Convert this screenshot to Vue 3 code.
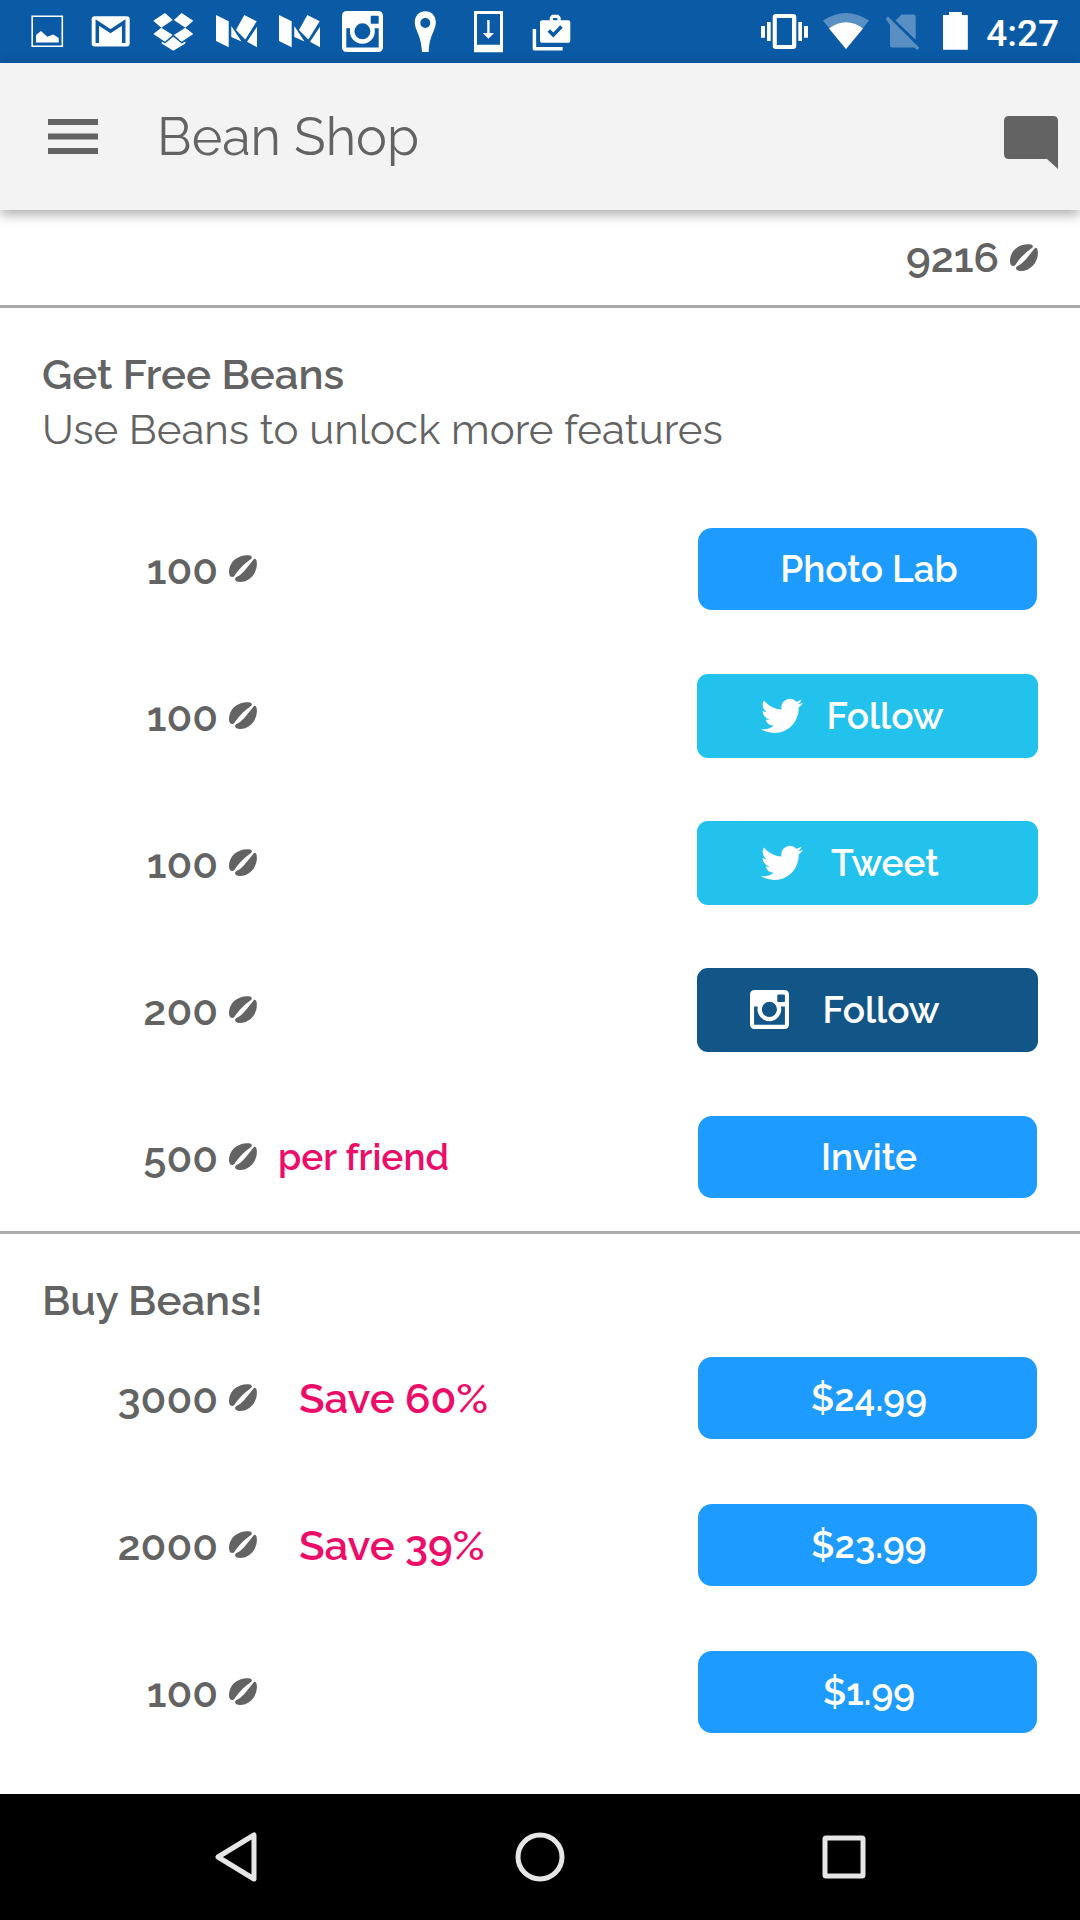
<script setup>
const beanUpper = 'M22 4C23.5 3 23 .8 21 .4C10-1 0 6 0 17C0 20 1 22 3.5 22C5 22 5.5 20.5 7 18.5C11 13 16 8 22 4Z'
const beanLower = 'M24.5 4.5C25.5 3.2 27 3.5 27.6 6C29.5 17 21 27 11 27C8 27 6 26 6 24C6.3 22 9 21.5 11 20C16 16 20 10 24.5 4.5Z'
const beanPath = beanUpper + beanLower
const cameraPath = 'M5 0H36Q41 0 41 5V36Q41 41 36 41H5Q0 41 0 36V5Q0 0 5 0ZM29.7 4.7Q28.7 4.7 28.7 5.7V11.7Q28.7 12.7 29.7 12.7H35.7Q36.7 12.7 36.7 11.7V5.7Q36.7 4.7 35.7 4.7ZM4.3 17.3H8.2A12.5 12.5 0 1 0 32.5 17.3H36.7V36.5H4.3ZM20.4 12.3A8 8 0 1 0 20.4 28.3A8 8 0 1 0 20.4 12.3Z'
const birdPath = 'M23.953 4.57a10 10 0 01-2.825.775 4.958 4.958 0 002.163-2.723c-.951.555-2.005.959-3.127 1.184a4.92 4.92 0 00-8.384 4.482C7.69 8.095 4.067 6.13 1.64 3.162a4.822 4.822 0 00-.666 2.475c0 1.71.87 3.213 2.188 4.096a4.904 4.904 0 01-2.228-.616v.06a4.923 4.923 0 003.946 4.827 4.996 4.996 0 01-2.212.085 4.936 4.936 0 004.604 3.417 9.867 9.867 0 01-6.102 2.105c-.39 0-.779-.023-1.17-.067a13.995 13.995 0 007.557 2.209c9.053 0 13.998-7.496 13.998-13.985 0-.21 0-.42-.015-.63A9.935 9.935 0 0024 4.59z'

const freeOffers = [
  { beans: 100, action: 'Photo Lab' },
  { beans: 100, action: 'Follow', network: 'twitter' },
  { beans: 100, action: 'Tweet', network: 'twitter' },
  { beans: 200, action: 'Follow', network: 'instagram' },
  { beans: 500, note: 'per friend', action: 'Invite' },
]
const packs = [
  { beans: 3000, note: 'Save 60%', action: '$24.99' },
  { beans: 2000, note: 'Save 39%', action: '$23.99' },
  { beans: 100, action: '$1.99' },
]
</script>

<template>
  <div class="screen">
    <div class="status">
      <div class="status-group">
        <svg viewBox="0 0 63 63"><path d="M16.2 16.2H46.3V46.3H16.2Z" fill="none" stroke="#fff" stroke-width="1.6" /><path d="M20 42.5V35L25 31L31.3 36.7L37.3 34.5L42.7 38V42.5Z" /></svg>
        <svg viewBox="0 0 63 63"><rect x="12.7" y="16.3" width="38" height="30.2" rx="3" /><path class="cut" d="M18.3 43V22.5L31.5 31.2L44.7 22.5V43" /></svg>
        <svg viewBox="0 0 63 63"><path d="M11.3 20.7L23 13L30.7 20L19.3 27.7ZM51.3 20.7L39.6 13L31.9 20L43.3 27.7ZM19.3 27.7L30.7 35L23 41.7L11.3 34ZM43.3 27.7L31.9 35L39.6 41.7L51.3 34ZM19.7 41.6L23 43.6L31.3 36.8L39.7 43.6L43.3 41.6V43.5L31.3 50.7L19.7 43.5Z" /></svg>
        <svg v-for="n in 2" :key="n" viewBox="0 0 63 63"><path d="M11 15L23.7 21.3V47.3L11 41ZM39.3 15L51.7 21.3L40.3 39.5L31 30ZM26.3 26L36.5 41.5L26.3 37ZM52 26.7V47.3L42 41.7Z" /></svg>
        <svg viewBox="0 0 63 63"><path transform="translate(11 11)" fill-rule="evenodd" :d="cameraPath" /></svg>
        <svg viewBox="0 0 63 63"><path fill-rule="evenodd" d="M31.3 11.3C37.5 11.3 41.8 16 41.8 22C41.8 31 35.5 34 34.7 52H28C27.2 34 20.8 31 20.8 22C20.8 16 25.2 11.3 31.3 11.3ZM31.3 18A5 5 0 1 0 31.3 28A5 5 0 1 0 31.3 18Z" /></svg>
        <svg viewBox="0 0 63 63"><path fill-rule="evenodd" d="M17 11H46V52.3H17ZM20 14V44.7H43V14Z" /><path d="M30.2 20H32.6V33H37L31.4 38.7L25.8 33H30.2Z" /></svg>
        <svg viewBox="0 0 63 63"><path fill-rule="evenodd" d="M22 20.3H29.7V17.5L32 14.8H38.3L40.7 17.5V20.3H48.3Q50.3 20.3 50.3 22.3V40.7Q50.3 42.7 48.3 42.7H22Q20 42.7 20 40.7V22.3Q20 20.3 22 20.3ZM33 20.3H37.4V18H33Z" /><path class="cut" d="M28.8 30.5L33.3 35L41.5 26.5" /><path d="M14.4 29V48.8H42.7" fill="none" stroke="#fff" stroke-width="3.5" stroke-linejoin="round" /></svg>
      </div>
      <div class="status-group">
        <svg class="vibrate" viewBox="0 0 55 63"><path d="M0 26H4V37.7H0ZM6 22H9.7V41H6ZM37.3 22H41V41H37.3ZM43 26H47V37.7H43Z" /><path fill-rule="evenodd" d="M15 14H32Q35.3 14 35.3 17.3V45.7Q35.3 49 32 49H15Q11.7 49 11.7 45.7V17.3Q11.7 14 15 14ZM15.8 18V45H31V18Z" /></svg>
        <svg class="wifi" viewBox="0 0 60 63"><path opacity=".32" d="M30 49L7 20.5Q30 5.5 53 20.5Z" /><path d="M30 49L13 28.5Q30 16 47 28.5Z" /></svg>
        <svg class="sim" viewBox="0 0 54 63"><g opacity=".32"><path d="M19.5 20.5L25.7 14.5H37.5Q39.7 14.5 39.7 17V39.7ZM14 25L9.7 19L12 16.5L43.3 47.8L41 50L38.3 47.5H16.5Q14 47.5 14 45Z" /></g></svg>
        <svg class="battery" viewBox="0 0 50 63"><path d="M13 15H19V12H31.8V15H37.8V49.7H13Z" /></svg>
        <time class="clock">4:27</time>
      </div>
    </div>

    <header class="toolbar">
      <button class="icon-button" aria-label="Menu">
        <svg class="menu" viewBox="0 0 50 35"><path d="M0 0H50V6H0ZM0 14.5H50V20.5H0ZM0 29H50V35H0Z" /></svg>
      </button>
      <h1>Bean Shop</h1>
      <button class="icon-button comment-button" aria-label="Messages">
        <svg class="comment" viewBox="0 0 54 54"><path d="M5 0H49Q54 0 54 5V53L43 43H5Q0 43 0 38V5Q0 0 5 0Z" /></svg>
      </button>
    </header>

    <main>
      <div class="balance">
        <span class="amount">9216</span>
        <svg class="bean" viewBox="0 0 28 27"><path :d="beanPath" /></svg>
      </div>

      <section class="free">
        <h2>Get Free Beans</h2>
        <p class="subtitle">Use Beans to unlock more features</p>
        <ul>
          <li v-for="(offer, i) in freeOffers" :key="i">
            <span class="amount">{{ offer.beans }}</span>
            <svg class="bean" viewBox="0 0 28 27"><path :d="beanPath" /></svg>
            <span v-if="offer.note" class="note">{{ offer.note }}</span>
            <button class="action" :class="offer.network">
              <svg v-if="offer.network === 'twitter'" viewBox="0 0 24 24"><path :d="birdPath" /></svg>
              <svg v-if="offer.network === 'instagram'" viewBox="0 0 41 41"><path fill-rule="evenodd" :d="cameraPath" /></svg>
              <span class="label">{{ offer.action }}</span>
            </button>
          </li>
        </ul>
      </section>

      <section class="buy">
        <h2>Buy Beans!</h2>
        <ul>
          <li v-for="pack in packs" :key="pack.beans">
            <span class="amount">{{ pack.beans }}</span>
            <svg class="bean" viewBox="0 0 28 27"><path :d="beanPath" /></svg>
            <span v-if="pack.note" class="note saving">{{ pack.note }}</span>
            <button class="action">{{ pack.action }}</button>
          </li>
        </ul>
      </section>
    </main>

    <nav class="system-nav">
      <button aria-label="Back"><svg viewBox="0 0 50 50"><path d="M43 3V47L7 25Z" /></svg></button>
      <button aria-label="Home"><svg viewBox="0 0 50 50"><circle cx="25" cy="25" r="22" /></svg></button>
      <button aria-label="Recent apps"><svg viewBox="0 0 50 50"><rect x="6" y="6" width="38" height="38" rx="1" /></svg></button>
    </nav>
  </div>
</template>

<style>
body {
  margin: 0;
  background: #fff;
}
</style>

<style scoped>
.screen {
  display: flex;
  flex-direction: column;
  min-height: 100vh;
  color: #636363;
  font-family: Raleway, Lato, "Open Sans", sans-serif;
  font-size: 42px;
}
h1, h2, p, ul {
  margin: 0;
  padding: 0;
}
svg {
  display: block;
  flex: none;
  fill: currentColor;
}
button {
  border: 0;
  padding: 0;
  background: none;
  color: inherit;
  font: inherit;
}
.status {
  display: flex;
  justify-content: space-between;
  height: 63px;
  padding: 0 21px 0 16px;
  background: #0b5aa5;
  color: #fff;
}
.status-group {
  display: flex;
  align-items: center;
}
.status-group svg {
  width: 63px;
  height: 63px;
}
.status-group .vibrate { width: 55px; }
.status-group .wifi { width: 60px; }
.status-group .sim { width: 54px; }
.status-group .battery { width: 50px; }
.cut {
  fill: none;
  stroke: #0b5aa5;
  stroke-width: 3.5;
}
.clock {
  padding: 4px 0 0 6px;
  font: 500 37px/44px Roboto, sans-serif;
}
.toolbar {
  position: relative;
  display: flex;
  align-items: center;
  height: 147px;
  padding: 0 22px 0 48px;
  background: #f3f3f3;
  box-shadow: 0 4px 12px rgba(0, 0, 0, 0.35);
}
.menu {
  width: 50px;
  height: 35px;
}
.comment {
  width: 54px;
  height: 54px;
}
.comment-button {
  margin: 12px 0 0 auto;
}
h1 {
  margin-left: 59px;
  font-size: 52px;
  font-weight: 400;
  line-height: 64px;
}
.balance {
  display: flex;
  justify-content: flex-end;
  align-items: center;
  gap: 11px;
  height: 95px;
  padding-right: 42px;
  border-bottom: 3px solid #aaa;
}
.bean {
  width: 28px;
  height: 27px;
}
.amount {
  font-weight: 600;
}
section {
  padding-top: 43px;
}
h2 {
  padding-left: 42px;
  font-size: 42px;
  font-weight: 600;
  line-height: 47px;
}
.subtitle {
  padding: 0 42px 33px;
  line-height: 64px;
}
.free {
  padding-bottom: 1px;
}
.buy {
  padding-bottom: 29px;
  border-top: 3px solid #aaa;
}
ul {
  list-style: none;
}
li {
  display: flex;
  align-items: center;
  height: 147px;
  padding-right: 42px;
}
li .amount {
  width: 218px;
  margin-right: 11px;
  padding-top: 2px;
  text-align: right;
}
.note {
  margin-left: 21px;
  color: #ed0d69;
  font-size: 37px;
  font-weight: 600;
}
.saving {
  margin-left: 42px;
  padding-top: 2px;
  font-size: 42px;
}
.action {
  display: flex;
  align-items: center;
  justify-content: center;
  width: 339px;
  height: 82px;
  margin: 0 1px 0 auto;
  padding-left: 3px;
  border-radius: 14px;
  background: #1e9bff;
  color: #fff;
  font-size: 37px;
  font-weight: 600;
}
.twitter, .instagram {
  justify-content: flex-start;
  width: 341px;
  height: 84px;
  margin-right: 0;
  border-radius: 11px;
}
.twitter .label, .instagram .label {
  width: 118px;
  text-align: center;
}
.twitter {
  gap: 23px;
  padding-left: 64px;
  background: #22c2ed;
}
.twitter svg {
  width: 42px;
  height: 42px;
}
.instagram {
  gap: 33px;
  padding-left: 53px;
  background: #125687;
}
.instagram svg {
  width: 39px;
  height: 39px;
}
.system-nav {
  display: flex;
  height: 126px;
  margin-top: auto;
  padding: 0 84px;
  background: #000;
  color: #e6e6e6;
}
.system-nav button {
  display: flex;
  flex: 1;
  align-items: center;
  justify-content: center;
}
.system-nav svg {
  width: 50px;
  height: 50px;
  fill: none;
  stroke: currentColor;
  stroke-width: 5;
  stroke-linejoin: round;
}
</style>
